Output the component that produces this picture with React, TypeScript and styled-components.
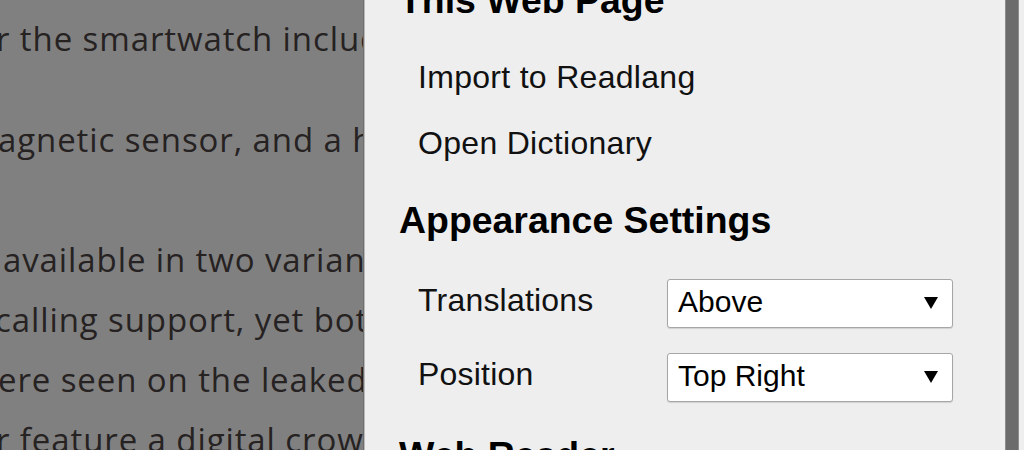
import React from "react";
import styled, { createGlobalStyle } from "styled-components";

const Global = createGlobalStyle`
  html, body { margin: 0; padding: 0; background: #eeeeee; }
  body { width: 1024px; height: 450px; overflow: hidden; }
`;

const Screen = styled.div`
  display: flex;
  width: 1024px;
  height: 450px;
  overflow: hidden;
`;

const Backdrop = styled.div`
  flex: 0 0 363px;
  height: 450px;
  overflow: hidden;
  background: #808080;
  font-family: "Open Sans", "Liberation Sans", sans-serif;
  font-size: 33px;
  letter-spacing: 0.9px;
  line-height: 60px;
  color: #262222;
`;

const Article = styled.div`
  padding-top: 9px;
`;

const Paragraph = styled.p<{ $gap: number }>`
  margin: 0 0 ${(p) => p.$gap}px 0;
`;

const Line = styled.span<{ $shift: number }>`
  display: block;
  white-space: nowrap;
  margin-left: ${(p) => p.$shift}px;
`;

const Panel = styled.div`
  flex: 0 0 642px;
  box-sizing: border-box;
  height: 450px;
  overflow: hidden;
  background: #eeeeee;
  border-left: 1px solid #6e6e6e;
  box-shadow: inset 1px 0 0 #b9b9b9;
  padding-left: 35px;
  font-family: "Liberation Sans", Arial, sans-serif;
  color: #111;
`;

const PanelBody = styled.div`
  display: flex;
  flex-direction: column;
  margin-top: -22px;
`;

const Heading = styled.h3<{ $after: number }>`
  margin: 0 0 ${(p) => p.$after}px 0;
  font-size: 37.44px;
  line-height: 44px;
  font-weight: bold;
  color: #000;
  white-space: nowrap;
`;

const MenuItem = styled.div<{ $after: number }>`
  margin: 0 0 ${(p) => p.$after}px 19px;
  font-size: 32px;
  line-height: 36px;
  letter-spacing: 0.3px;
  white-space: nowrap;
`;

const SettingRow = styled.div<{ $after: number }>`
  display: flex;
  align-items: center;
  height: 50px;
  margin: 0 0 ${(p) => p.$after}px 19px;
`;

const SettingLabel = styled.span`
  flex: 0 0 249px;
  font-size: 32px;
  line-height: 36px;
  letter-spacing: 0.2px;
  padding-bottom: 6px;
  white-space: nowrap;
`;

const SelectBox = styled.div`
  display: flex;
  align-items: center;
  justify-content: space-between;
  box-sizing: border-box;
  width: 286px;
  height: 49px;
  padding: 0 14px 0 10px;
  background: #ffffff;
  border: 1px solid #a6a6a6;
  border-radius: 3px;
  box-shadow: 0 1px 1px rgba(0, 0, 0, 0.12);
  font-size: 30px;
  line-height: 34px;
  color: #000;
  white-space: nowrap;
`;

const SelectText = styled.span`
  padding-bottom: 3px;
`;

const Arrow = styled.svg`
  flex: 0 0 auto;
  display: block;
`;

const ScrollBar = styled.div`
  flex: 0 0 12px;
  height: 450px;
  background: #6b6b6b;
  border-left: 1px solid #8c8c8c;
  border-right: 1px solid #8c8c8c;
`;

const Tail = styled.div`
  flex: 1 1 auto;
  background: #eeeeee;
`;

const Select: React.FC<{ value: string }> = ({ value }) => (
  <SelectBox role="combobox" aria-label={value}>
    <SelectText>{value}</SelectText>
    <Arrow width="14" height="12" viewBox="0 0 14 12">
      <polygon points="0,0 14,0 7,12" fill="#000" />
    </Arrow>
  </SelectBox>
);

export default function App() {
  return (
    <>
      <Global />
      <Screen>
        <Backdrop>
          <Article>
            <Paragraph $gap={41}>
              <Line $shift={-4}>r the smartwatch includes</Line>
            </Paragraph>
            <Paragraph $gap={60}>
              <Line $shift={-2}>agnetic sensor, and a heart</Line>
            </Paragraph>
            <Paragraph $gap={0}>
              <Line $shift={3}>available in two variants</Line>
              <Line $shift={-5}>calling support, yet both</Line>
              <Line $shift={-2}>ere seen on the leaked</Line>
              <Line $shift={-4}>r feature a digital crown</Line>
            </Paragraph>
          </Article>
        </Backdrop>
        <Panel>
          <PanelBody>
            <Heading $after={37}>This Web Page</Heading>
            <MenuItem $after={30}>Import to Readlang</MenuItem>
            <MenuItem $after={37}>Open Dictionary</MenuItem>
            <Heading $after={36}>Appearance Settings</Heading>
            <SettingRow $after={24}>
              <SettingLabel>Translations</SettingLabel>
              <Select value="Above" />
            </SettingRow>
            <SettingRow $after={31}>
              <SettingLabel>Position</SettingLabel>
              <Select value="Top Right" />
            </SettingRow>
            <Heading $after={0}>Web Reader</Heading>
          </PanelBody>
        </Panel>
        <ScrollBar />
        <Tail />
      </Screen>
    </>
  );
}
